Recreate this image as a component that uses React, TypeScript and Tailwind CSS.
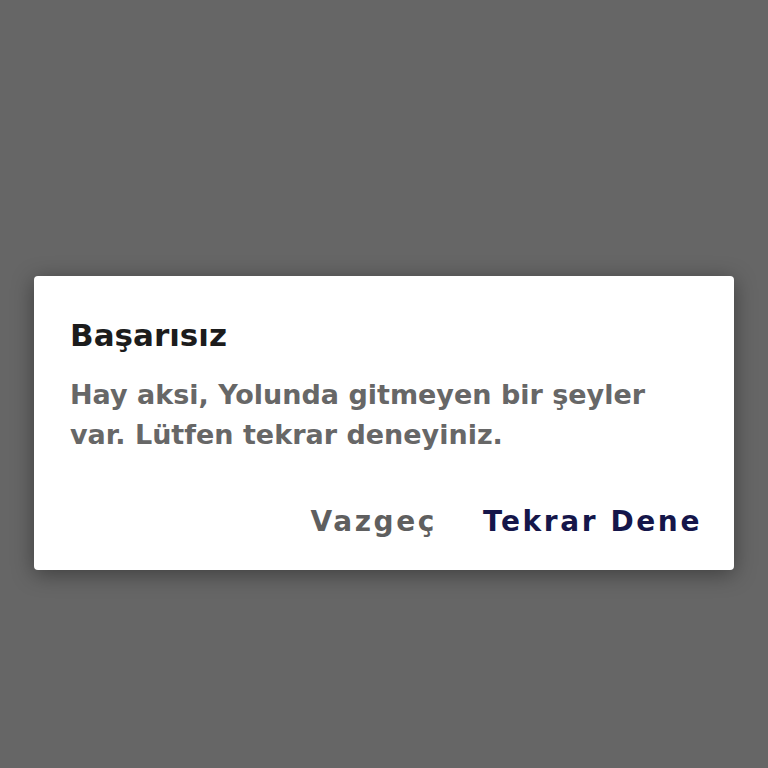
export default function App() {
  return (
    <div className="min-h-[768px] w-full bg-[#666666] pt-[276px] px-[34px]" style={{ fontFamily: '"DejaVu Sans", sans-serif' }}>
      <div className="bg-white rounded-[4px] shadow-[0_4px_22px_rgba(0,0,0,0.4)] h-[294px] pl-[36px] pr-[32px] pt-[41px]">
        <h2 className="text-[31px] font-bold text-[#1c1c1c] leading-[36px]">Başarısız</h2>
        <p className="mt-[22px] text-[27px] leading-[40px] text-[#676767] font-bold">
          Hay aksi, Yolunda gitmeyen bir şeyler
          <br />
          var. Lütfen tekrar deneyiniz.
        </p>
        <div className="flex justify-end gap-[46px] mt-[49px]">
          <button className="text-[28px] leading-[36px] font-bold tracking-[2.6px] text-[#5f5f5f]">Vazgeç</button>
          <button className="text-[28px] leading-[36px] font-bold tracking-[2.6px] text-[#15164a]">Tekrar Dene</button>
        </div>
      </div>
    </div>
  );
}
